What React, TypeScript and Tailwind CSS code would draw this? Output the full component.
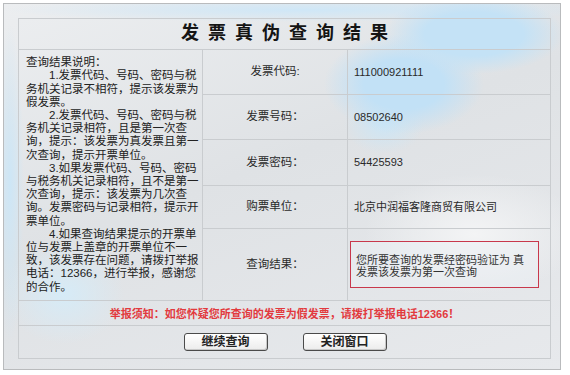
const notes = [
  { text: "查询结果说明：", indent: false },
  { text: "1.发票代码、号码、密码与税", indent: true },
  { text: "务机关记录不相符，提示该发票为", indent: false },
  { text: "假发票。", indent: false },
  { text: "2.发票代码、号码、密码与税", indent: true },
  { text: "务机关记录相符，且是第一次查", indent: false },
  { text: "询，提示：该发票为真发票且第一", indent: false },
  { text: "次查询，提示开票单位。", indent: false },
  { text: "3.如果发票代码、号码、密码", indent: true },
  { text: "与税务机关记录相符，且不是第一", indent: false },
  { text: "次查询，提示：该发票为几次查", indent: false },
  { text: "询。发票密码与记录相符，提示开", indent: false },
  { text: "票单位。", indent: false },
  { text: "4.如果查询结果提示的开票单", indent: true },
  { text: "位与发票上盖章的开票单位不一", indent: false },
  { text: "致，该发票存在问题，请拨打举报", indent: false },
  { text: "电话：12366，进行举报，感谢您", indent: false },
  { text: "的合作。", indent: false },
];

const fields = [
  { label: "发票代码:", value: "111000921111", h: "h-[45px]" },
  { label: "发票号码：", value: "08502640", h: "h-[45px]" },
  { label: "发票密码：", value: "54425593", h: "h-[46px]" },
  { label: "购票单位：", value: "北京中润福客隆商贸有限公司", h: "h-[43px]" },
];

function Button({ children }: { children: React.ReactNode }) {
  return (
    <button className="w-[84px] h-[18px] rounded-[3px] border border-[#4a4a4a] bg-[linear-gradient(#ffffff,#ececec)] text-[12px] leading-none font-bold text-[#222] shadow-[inset_-1px_-1px_0_#c8c8c8]">
      {children}
    </button>
  );
}

export default function App() {
  return (
    <div className="w-[570px] h-[375px] bg-white overflow-hidden font-['Liberation_Sans','Noto_Sans_CJK_SC',sans-serif] text-[#2a2a2a]">
      <div className="ml-[3px] mt-[3px] w-[558px] h-[367px] border border-[#b9bbbd] pl-[14px] pt-[14px] bg-[#e3e5e8] bg-[radial-gradient(ellipse_90px_40px_at_470px_30px,#c4e2f6_0%,#c4e2f6_55%,transparent_100%),radial-gradient(ellipse_80px_50px_at_400px_80px,#c2e1f6_0%,#c2e1f6_50%,transparent_100%),radial-gradient(ellipse_40px_30px_at_380px_120px,#cce6f6_0%,transparent_100%),radial-gradient(ellipse_300px_12px_at_300px_6px,#cfe7f7_0%,transparent_100%),radial-gradient(ellipse_14px_160px_at_6px_180px,#cde6f6_0%,transparent_100%),radial-gradient(ellipse_60px_50px_at_60px_290px,#d6ebf7_0%,transparent_100%),radial-gradient(ellipse_110px_60px_at_470px_230px,#f3f4f5_0%,transparent_100%),linear-gradient(160deg,#eceef0_0%,#dfe2e5_45%,#e7e9ec_100%)]">
        <table className="w-[532px] h-[340px] table-fixed border-collapse border border-[#c3c6c9]">
          <colgroup>
            <col className="w-[184px]" />
            <col className="w-[145px]" />
            <col className="w-[203px]" />
          </colgroup>
          <tbody>
            <tr className="h-[31px]">
              <td colSpan={3} className="border border-[#c9cccf] text-center p-0">
                <span className="pl-[9px] text-[18px] leading-none font-bold tracking-[9px] text-[#151515]">
                  发票真伪查询结果
                </span>
              </td>
            </tr>
            {fields.map((f, i) => (
              <tr key={f.label} className={f.h}>
                {i === 0 && (
                  <td rowSpan={5} className="border border-[#c9cccf] align-middle pl-[7px] pr-0 py-0">
                    <div className="text-[11.5px] leading-[13.2px] text-[#222]">
                      {notes.map((n) => (
                        <div key={n.text} className={`whitespace-nowrap ${n.indent ? "pl-[23px]" : ""}`}>
                          {n.text}
                        </div>
                      ))}
                    </div>
                  </td>
                )}
                <td className="border border-[#c9cccf] text-center text-[11.5px] text-[#2a2a2a] p-0">{f.label}</td>
                <td className="border border-[#c9cccf] pl-[6px] text-[11px] text-[#2a2a2a] p-0 whitespace-nowrap">
                  {f.value}
                </td>
              </tr>
            ))}
            <tr className="h-[72px]">
              <td className="border border-[#c9cccf] text-center text-[11.5px] text-[#2a2a2a] p-0">查询结果：</td>
              <td className="border border-[#c9cccf] pl-[2px] p-0">
                <div className="w-[189px] h-[47px] border-[1.5px] border-[#c8384c] flex flex-col justify-center pl-[5px] pt-[3px] text-[11px] leading-[12px] text-[#333] bg-[#eef3f7]/40">
                  <div className="whitespace-nowrap">您所要查询的发票经密码验证为 真</div>
                  <div className="whitespace-nowrap">发票该发票为第一次查询</div>
                </div>
              </td>
            </tr>
            <tr className="h-[25px]">
              <td colSpan={3} className="border border-[#c9cccf] text-center p-0">
                <span className="text-[11px] font-bold text-[#e23a3e]">
                  举报须知：如您怀疑您所查询的发票为假发票，请拨打举报电话12366！
                </span>
              </td>
            </tr>
            <tr className="h-[33px]">
              <td colSpan={3} className="border border-[#c9cccf] p-0">
                <div className="flex justify-center gap-[35px] pl-[1px]">
                  <Button>继续查询</Button>
                  <Button>关闭窗口</Button>
                </div>
              </td>
            </tr>
          </tbody>
        </table>
      </div>
    </div>
  );
}
